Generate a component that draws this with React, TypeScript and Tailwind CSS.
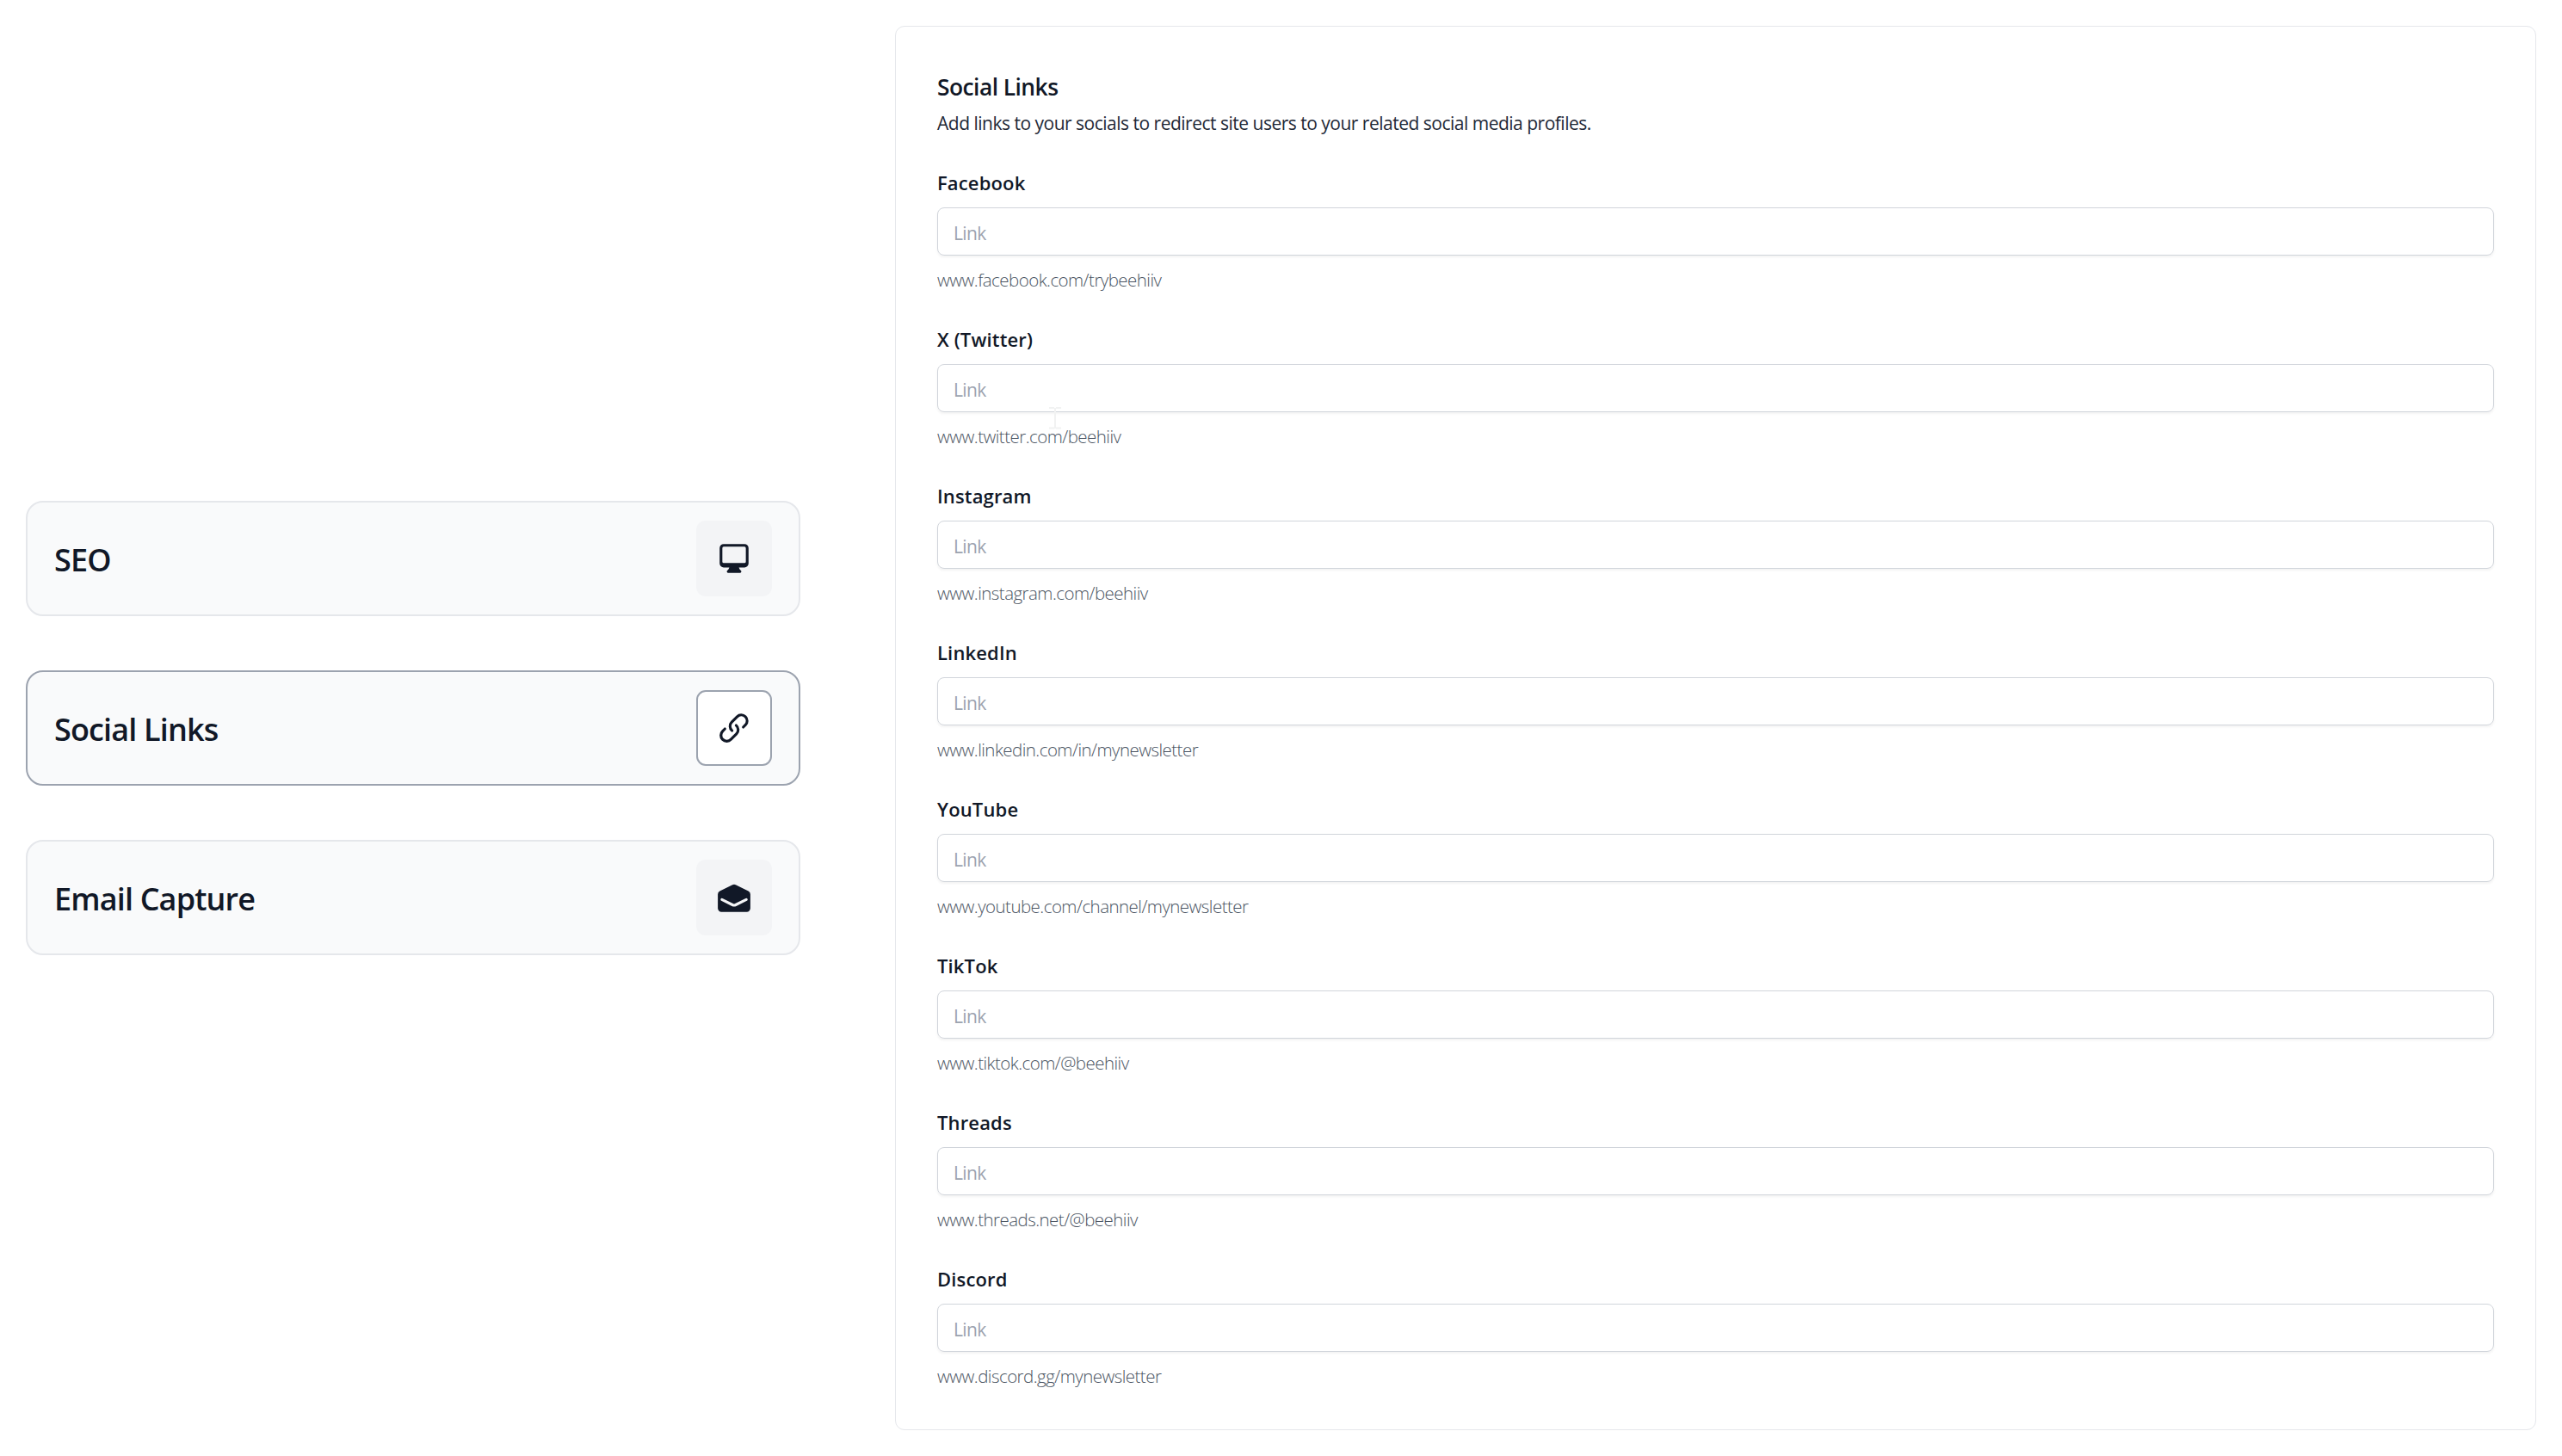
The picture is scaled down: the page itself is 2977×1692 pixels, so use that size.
import { useState } from "react"
import { HiMiniComputerDesktop, HiMiniEnvelopeOpen, HiMiniLink } from "react-icons/hi2"

const tabs = [
  { title: "SEO", icon: HiMiniComputerDesktop },
  { title: "Social Links", icon: HiMiniLink },
  { title: "Email Capture", icon: HiMiniEnvelopeOpen },
]

const socials = [
  { name: "Facebook", example: "www.facebook.com/trybeehiiv" },
  { name: "X (Twitter)", example: "www.twitter.com/beehiiv" },
  { name: "Instagram", example: "www.instagram.com/beehiiv" },
  { name: "LinkedIn", example: "www.linkedin.com/in/mynewsletter" },
  { name: "YouTube", example: "www.youtube.com/channel/mynewsletter" },
  { name: "TikTok", example: "www.tiktok.com/@beehiiv" },
  { name: "Threads", example: "www.threads.net/@beehiiv" },
  { name: "Discord", example: "www.discord.gg/mynewsletter" },
]

export default function App() {
  const [activeTab, setActiveTab] = useState("Social Links")

  return (
    <div className="relative flex h-[1692px] w-[2977px] gap-[110px] bg-white p-[30px] font-['Open_Sans','Noto_Sans',sans-serif] text-[#111827]">
      {/* Tabs */}
      <div className="flex w-[900px] shrink-0 flex-col justify-center gap-[63px]">
        {tabs.map((tab) => {
          const active = tab.title === activeTab
          return (
            <button
              key={tab.title}
              onClick={() => setActiveTab(tab.title)}
              className={`flex h-[134px] items-center justify-between rounded-[20px] border-2 bg-[#f9fafb] px-[31px]
                ${active ? "border-[#9ca3af]" : "border-[#e5e7eb]"}`}
            >
              <span className="pt-1 text-[36px] font-semibold tracking-[-0.85px]">{tab.title}</span>
              <span
                className={`flex size-[88px] items-center justify-center rounded-[11px]
                  ${active ? "border-2 border-[#9ca3af] bg-white" : "bg-[#f3f4f6]"}`}
              >
                <tab.icon className="size-[42px]" />
              </span>
            </button>
          )
        })}
      </div>

      {/* Form */}
      <div className="flex-1 rounded-[11px] border border-[#e5e7eb] px-12 pt-[50px]">
        <h2 className="text-[26.4px] leading-10 font-semibold tracking-[-0.55px]">Social Links</h2>
        <p className="mt-1.5 text-[21px] leading-8 tracking-[-0.5px] text-[#1f2937]">
          Add links to your socials to redirect site users to your related social media profiles.
        </p>
        <div className="mt-[37px] flex flex-col gap-[38px]">
          {socials.map((social) => (
            <div key={social.name} className="flex flex-col gap-[13px]">
              <label htmlFor={social.name} className="text-[22px] leading-8 font-semibold tracking-[0.15px]">
                {social.name}
              </label>
              <input
                id={social.name}
                type="text"
                placeholder="Link"
                className="h-14 w-full rounded-lg border border-[#d1d5db] px-[18px] pt-[3px] text-[21px] tracking-[-0.6px] shadow-[0_2px_3px_rgba(0,0,0,0.05)] placeholder:text-[#9ca3af]"
              />
              <p className="text-[20.5px] leading-[30px] font-light tracking-[-0.54px] text-[#4b5563]">
                {social.example}
              </p>
            </div>
          ))}
        </div>
      </div>

      {/* Text cursor */}
      <svg className="pointer-events-none absolute top-[473px] left-[1219px] h-[26px] w-[14px]" viewBox="0 0 14 26" fill="none" stroke="#f1f2f2" strokeWidth="2">
        <path d="M0 1h6M8 1h6M7 1v24M0 24.500h6M8 24.500h6" />
      </svg>
    </div>
  )
}
